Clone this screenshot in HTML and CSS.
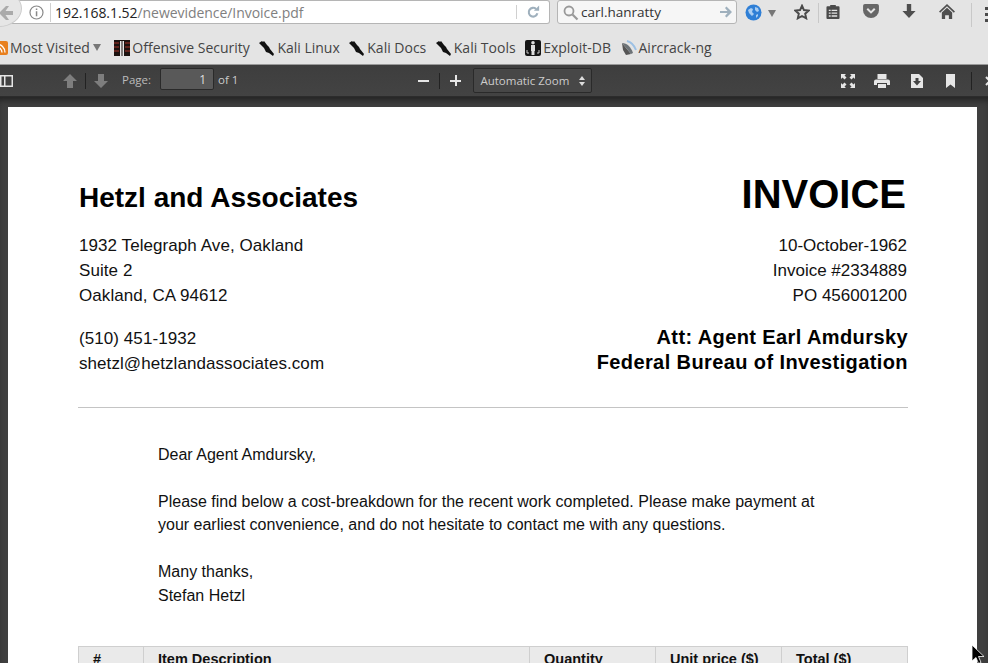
FILE: index.html
```html
<!DOCTYPE html>
<html lang="en">
<head>
    <meta charset="UTF-8">
    <title>Invoice.pdf</title>
    <link rel="stylesheet" href="styles.css">
</head>
<body>
    <div class="nav">
        <div class="url-bar">
            <svg class="info-icon" width="15" height="15" viewBox="0 0 15 15"><circle cx="7.5" cy="7.5" r="6.5" fill="none" stroke="#888" stroke-width="1.2"/><path d="M6.8 3.5h1.5V5H6.800zM6.800 6.300h1.500v5H6.800z" fill="#888"/></svg>
            <span class="url-text">192.168.1.52<span class="url-path">/newevidence/Invoice.pdf</span></span>
            <span class="reload">
                <svg width="14" height="14" viewBox="0 0 16 16"><path d="M13 9.500A5 5 0 1 1 11.500 4.500" fill="none" stroke="#9fb0bd" stroke-width="2.400"/><path d="M9 6.500h6v-6z" fill="#9fb0bd"/></svg>
            </span>
        </div>
        <span class="back-btn">
            <svg width="14" height="14" viewBox="0 0 14 14"><path d="M7 0 0 7l7 7h3L6.500 9H14V5H6.500L10 0z" fill="#aaa"/></svg>
        </span>
        <div class="search-bar">
            <svg width="17" height="17" viewBox="0 0 17 17"><circle cx="7" cy="7" r="4.500" fill="none" stroke="#999" stroke-width="1.800"/><path d="m10.500 10.500 5 5" stroke="#999" stroke-width="2.200"/></svg>
            <span class="search-text">carl.hanratty</span>
            <svg width="12" height="12" viewBox="0 0 12 12"><path d="M0 5h7.500L5 2l1.500-1.500L12 6l-5.500 5.500L5 10l2.500-3H0z" fill="#9fb0bd"/></svg>
        </div>
        <svg class="globe" width="17" height="17" viewBox="0 0 17 17"><circle cx="8.500" cy="8.500" r="8" fill="#2f7fd6"/><path d="M3 6l3-2 2 1-1 3 2 2-2 2-3-3zM10 3l3 1 1 3-2 1-2-2zM11 11l2-1 0 2-2 2z" fill="#a9cdf2"/></svg>
        <span class="tri-down"></span>
        <div class="nav-btn star-btn">
            <svg width="16" height="16" viewBox="0 0 18 17"><path d="M9 1.500 11.200 6.300 16.500 6.900 12.600 10.400 13.700 15.600 9 13 4.300 15.600 5.400 10.400 1.500 6.900 6.800 6.300z" fill="none" stroke="#4a4a4a" stroke-width="2.200"/></svg>
        </div>
        <div class="nav-sep"></div>
        <div class="nav-btn list-btn">
            <svg width="14" height="15" viewBox="0 0 15 16"><path d="M1.500 2.500h3V1h6v1.500h3a1 1 0 0 1 1 1V15a1 1 0 0 1-1 1h-12a1 1 0 0 1-1-1V3.500a1 1 0 0 1 1-1z" fill="#4a4a4a"/><path d="M3 6h2v1.500H3zM6 6h6v1.500H6zM3 9h2v1.500H3zM6 9h6v1.500H6zM3 12h2v1.500H3zM6 12h6v1.500H6z" fill="#e4e4e4"/></svg>
        </div>
        <div class="nav-btn">
            <svg width="16" height="14" viewBox="0 0 17 15"><path d="M2 0h13a2 2 0 0 1 2 2v5a8.500 8 0 0 1-17 0V2a2 2 0 0 1 2-2z" fill="#666"/><path d="m4.500 5 4 4 4-4" fill="none" stroke="#e4e4e4" stroke-width="2.200"/></svg>
        </div>
        <div class="nav-btn">
            <svg width="14" height="14" viewBox="0 0 15 16"><path d="M5 0h5v8h5l-7.500 8L0 8h5z" fill="#4e4e4e"/></svg>
        </div>
        <div class="nav-btn">
            <svg width="16" height="15" viewBox="0 0 17 16"><path d="M8.500 0 17 8l-1.200 1.200-7.300-6.800-7.300 6.800L0 8z" fill="#4e4e4e"/><path d="M8.500 4 14 9v7h-3.500v-4h-4v4H3V9z" fill="#4e4e4e"/></svg>
        </div>
        <div class="nav-sep menu-sep"></div>
        <div class="menu-btn"><span></span><span></span><span></span></div>
    </div>

    <div class="bookmarks">
        <span class="bookmark rss-item">
            <svg width="14" height="14" viewBox="0 0 14 14"><rect width="14" height="14" rx="2" fill="#e8801f"/><circle cx="4" cy="10" r="1.500" fill="#fff"/><path d="M2.500 6a5.500 5.500 0 0 1 5.500 5.500M2.500 3a8.500 8.500 0 0 1 8.500 8.500" fill="none" stroke="#fff" stroke-width="1.300"/></svg>
            Most Visited
            <span class="tri-small"></span>
        </span>
        <span class="bookmark">
            <svg width="16" height="16" viewBox="0 0 16 16"><rect width="16" height="16" fill="#1c1210"/><path d="M0 3h5M0 7h5M0 11h5M11 3h5M11 7h5M11 11h5" stroke="#7a2a22" stroke-width="1.500"/><path d="M6 1h1.500v15H6zM8.500 1H10v15H8.500z" fill="#e8e8e8"/></svg>
            Offensive Security
        </span>
        <span class="bookmark">
            <svg width="16" height="16" viewBox="0 0 16 16"><path d="M0 3 3 1l1 1 1-1 3 4 2 2 1 2 4 5-1 2-4-3-3-1-2-4-2-2-2-2z" fill="#111"/></svg>
            Kali Linux
        </span>
        <span class="bookmark">
            <svg width="16" height="16" viewBox="0 0 16 16"><path d="M0 3 3 1l1 1 1-1 3 4 2 2 1 2 4 5-1 2-4-3-3-1-2-4-2-2-2-2z" fill="#111"/></svg>
            Kali Docs
        </span>
        <span class="bookmark">
            <svg width="16" height="16" viewBox="0 0 16 16"><path d="M0 3 3 1l1 1 1-1 3 4 2 2 1 2 4 5-1 2-4-3-3-1-2-4-2-2-2-2z" fill="#111"/></svg>
            Kali Tools
        </span>
        <span class="bookmark">
            <svg width="16" height="16" viewBox="0 0 16 16"><rect width="16" height="16" rx="2" fill="#151515"/><circle cx="8" cy="2.800" r="1.800" fill="#ddd"/><path d="M6 5h4v6H9.500v4h-3v-4H6z" fill="#ddd"/><path d="M2 10v3h2M14 10v3h-2" fill="none" stroke="#ccc"/></svg>
            Exploit-DB
        </span>
        <span class="bookmark">
            <svg width="16" height="16" viewBox="0 0 16 16"><path d="M1 3 10 14 5 15 2 10z" fill="#555"/><path d="M1 3c5 0 9 4 11 10l-2 1z" fill="#6c7378"/><path d="M6 1c4 1 7 4 9 9" fill="none" stroke="#9cc0e4" stroke-width="2"/></svg>
            Aircrack-ng
        </span>
    </div>

    <div class="pdf-toolbar">
        <span class="tb-btn sidebar-btn">
            <svg width="13" height="12" viewBox="0 0 13 12"><path d="M0 0h13v12H0zM1.500 1.500v9H4v-9zM5.500 1.500v9h6v-9z" fill="#e6e6e6" fill-rule="evenodd"/></svg>
        </span>
        <svg class="arrow-up" width="14" height="14" viewBox="0 0 14 14"><path d="M7 0l7 7H10v7H4V7H0z" fill="#7e7e7e"/></svg>
        <span class="tb-sep"></span>
        <svg class="arrow-down" width="14" height="14" viewBox="0 0 14 14"><path d="M4 0h6v7h4l-7 7-7-7h4z" fill="#7e7e7e"/></svg>
        <span class="page-label">Page:</span>
        <span class="page-input">1</span>
        <span class="page-of">of 1</span>
        <span class="zoom-out"></span>
        <span class="tb-sep zoom-sep"></span>
        <span class="zoom-in"></span>
        <span class="zoom-select">Automatic Zoom
            <svg width="6" height="10" viewBox="0 0 6 10"><path d="M3 0l3 4H0zM3 10 0 6h6z" fill="#ddd"/></svg>
        </span>
        <svg class="tb-right full-icon" width="14" height="14" viewBox="0 0 14 14"><path d="M0 0h5L3.500 1.500 5.500 3.500 3.500 5.500 1.500 3.500 0 5zM14 0v5L12.500 3.500 10.500 5.500 8.500 3.500 10.500 1.500 9 0zM0 14V9l1.500 1.500 2-2 2 2-2 2L5 14zM14 14H9l1.500-1.500-2-2 2-2 2 2L14 9z" fill="#e6e6e6"/></svg>
        <svg class="tb-right print-icon" width="16" height="14" viewBox="0 0 16 14"><path d="M3.500 0h9v5h-9zM2 5.500h12a2 2 0 0 1 2 2V11h-3V9H3v2H0V7.500a2 2 0 0 1 2-2zM4 10h8v4H4z" fill="#e6e6e6"/></svg>
        <svg class="tb-right save-icon" width="12" height="14" viewBox="0 0 12 14"><path d="M0 0h8l4 4v10H0z" fill="#e6e6e6"/><path d="M4.500 4h3v3H10l-4 4.500L2 7h2.500z" fill="#444"/></svg>
        <svg class="tb-right mark-icon" width="9" height="14" viewBox="0 0 9 14"><path d="M0 0h9v14l-4.500-3.500L0 14z" fill="#e6e6e6"/></svg>
        <span class="tb-sep end-sep"></span>
        <svg class="tools-btn" width="10" height="10" viewBox="0 0 10 10"><path d="M1 1l4 4-4 4" fill="none" stroke="#e6e6e6" stroke-width="2"/></svg>
    </div>

    <div class="viewer">
        <div class="page">
            <div class="row head-row">
                <h1 class="company">Hetzl and Associates</h1>
                <div class="invoice-title">INVOICE</div>
            </div>
            <div class="row addr-row">
                <div class="lines">
                    <div>1932 Telegraph Ave, Oakland</div>
                    <div>Suite 2</div>
                    <div>Oakland, CA 94612</div>
                </div>
                <div class="lines right">
                    <div>10-October-1962</div>
                    <div>Invoice #2334889</div>
                    <div>PO 456001200</div>
                </div>
            </div>
            <div class="row contact-row">
                <div class="lines">
                    <div>(510) 451-1932</div>
                    <div>shetzl@hetzlandassociates.com</div>
                </div>
                <div class="lines right att">
                    <div>Att: Agent Earl Amdursky</div>
                    <div>Federal Bureau of Investigation</div>
                </div>
            </div>
            <hr class="rule">
            <div class="letter">
                <p>Dear Agent Amdursky,</p>
                <p>Please find below a cost-breakdown for the recent work completed. Please make payment at<br>your earliest convenience, and do not hesitate to contact me with any questions.</p>
                <p>Many thanks,<br>Stefan Hetzl</p>
            </div>
            <table class="items">
                <tr>
                    <th class="col-num">#</th>
                    <th class="col-desc">Item Description</th>
                    <th class="col-val">Quantity</th>
                    <th class="col-val">Unit price ($)</th>
                    <th class="col-val">Total ($)</th>
                </tr>
            </table>
        </div>
    </div>

    <svg class="cursor" width="14" height="20" viewBox="0 0 14 20"><path d="M1 0v16l4-3.500 2.500 6 2.500-1-2.500-6H13z" fill="#000" stroke="#fff" stroke-width=".8"/></svg>
</body>
</html>
```

FILE: styles.css
```css
html, body {
    margin: 0;
    height: 663px;
    overflow: hidden;
}
body {
    font-family: "Open Sans", sans-serif;
    background-color: #e4e4e4;
    color: #3a3a3a;
    position: relative;
}

/* browser nav bar */
.nav {
    display: flex;
    align-items: flex-start;
    height: 33px;
}
.url-bar {
    display: flex;
    align-items: center;
    box-sizing: border-box;
    width: 550px;
    height: 24px;
    padding-left: 29px;
    background-color: #ffffff;
    border: 1px solid #b5b5b5;
    border-left: none;
    border-radius: 0 3px 3px 0;
    flex-shrink: 0;
}
/* round back button sits over the left end of the url bar */
.back-btn {
    position: absolute;
    left: -24px;
    top: -10px;
    display: flex;
    align-items: center;
    justify-content: flex-end;
    box-sizing: border-box;
    width: 46px;
    height: 37px;
    padding: 8px 8px 0 0;
    background-color: #e6e6e6;
    border: 1px solid #cccccc;
    border-radius: 50%;
}
.url-text {
    margin-left: 6px;
    padding-left: 4px;
    border-left: 1px solid #d0d0d0;
    font-size: 14px;
    letter-spacing: -0.05px;
    color: #222;
    flex-grow: 1;
}
.url-path {
    color: #808080;
}
.reload {
    display: flex;
    justify-content: center;
    width: 32px;
    border-left: 1px solid #d0d0d0;
}
.search-bar {
    display: flex;
    align-items: center;
    box-sizing: border-box;
    width: 180px;
    height: 24px;
    margin-left: 7px;
    padding: 0 4px;
    background-color: #f6f6f6;
    border: 1px solid #b5b5b5;
    border-radius: 3px;
    flex-shrink: 0;
}
.search-text {
    margin-left: 2px;
    font-size: 13.500px;
    color: #333;
    flex-grow: 1;
}
.globe {
    margin: 4px 0 0 8px;
    flex-shrink: 0;
}
.tri-down {
    margin: 10px 0 0 6px;
    border-left: 4px solid transparent;
    border-right: 4px solid transparent;
    border-top: 7px solid #777;
}
.nav-btn {
    display: flex;
    justify-content: center;
    width: 38px;
    padding-top: 4px;
    flex-shrink: 0;
}
.star-btn {
    width: 18px;
    margin-left: 17px;
}
.nav-sep {
    width: 1px;
    height: 20px;
    margin: 3px 0 0 7px;
    background-color: #c8c8c8;
    flex-shrink: 0;
}
.list-btn {
    margin-left: -5px;
}
.menu-sep {
    margin-left: 5px;
    height: 24px;
    margin-top: 3px;
}
.menu-btn {
    display: flex;
    flex-direction: column;
    gap: 3px;
    width: 16px;
    margin: 7px 0 0 13px;
    flex-shrink: 0;
}
.menu-btn span {
    display: block;
    height: 3px;
    background-color: #4a4a4a;
}

/* bookmarks */
.bookmarks {
    display: flex;
    align-items: center;
    gap: 9.500px;
    height: 31px;
    padding-bottom: 1px;
    margin: -1px 0 0 -6px;
    font-size: 14px;
    color: #444;
    white-space: nowrap;
}
.bookmark {
    display: flex;
    align-items: center;
    gap: 2px;
}
.tri-small {
    margin-left: 1px;
    border-left: 4px solid transparent;
    border-right: 4px solid transparent;
    border-top: 7px solid #777;
}
.rss-item {
    margin-right: 4px;
}

/* pdf viewer toolbar */
.pdf-toolbar {
    display: flex;
    align-items: center;
    box-sizing: border-box;
    height: 33px;
    border-top: 1px solid #999;
    background-image: linear-gradient(#3e3e3e, #434343);
    border-bottom: 1px solid #2c2c2c;
    color: #d0d0d0;
    font-size: 11.500px;
    white-space: nowrap;
}
.pdf-toolbar > * {
    flex-shrink: 0;
}
.tb-btn {
    display: flex;
}
.arrow-up {
    margin-left: 50px;
}
.tb-sep {
    width: 1px;
    height: 16px;
    margin: 0 8px;
    background-color: #222;
}
.page-label {
    margin: 0 0 3px 14px;
    color: #bbb;
}
.page-input {
    box-sizing: border-box;
    width: 54px;
    height: 22px;
    margin: 0 0 3px 9px;
    padding: 2px 7px;
    text-align: right;
    font-size: 12px;
    background-color: #595959;
    border: 1px solid #2a2a2a;
    border-radius: 2px;
    color: #ddd;
}
.page-of {
    margin: 0 0 3px 4px;
    color: #ccc;
}
.zoom-out {
    width: 11px;
    height: 2px;
    margin-left: 180px;
    background-color: #e6e6e6;
}
.zoom-sep {
    margin: 0 10px;
}
.zoom-in {
    width: 11px;
    height: 11px;
    background-image: linear-gradient(#e6e6e6, #e6e6e6), linear-gradient(#e6e6e6, #e6e6e6);
    background-size: 11px 2px, 2px 11px;
    background-position: center;
    background-repeat: no-repeat;
}
.zoom-select {
    display: flex;
    align-items: center;
    justify-content: space-between;
    box-sizing: border-box;
    width: 119px;
    height: 25px;
    margin-left: 12px;
    padding: 0 6px;
    background-color: #474747;
    border: 1px solid #2a2a2a;
    border-radius: 2px;
    font-size: 11.500px;
    color: #ccc;
}
.full-icon {
    margin-left: 249px;
}
.print-icon {
    margin-left: 19px;
}
.save-icon {
    margin-left: 21px;
}
.mark-icon {
    margin-left: 23px;
}
.end-sep {
    height: 18px;
    margin: 0 0 0 16px;
}
.tools-btn {
    margin-left: 13px;
}

/* pdf page */
.viewer {
    box-sizing: border-box;
    height: 566px;
    padding: 10px 11px 0 8px;
    background-color: #3f3f3f;
    box-shadow: inset 0 6px 6px -3px #222;
    overflow: hidden;
}
.page {
    box-sizing: border-box;
    height: 640px;
    padding: 66px 69px 0 70px;
    background-color: #ffffff;
    color: #111;
    font-family: "Liberation Sans", Arial, sans-serif;
    font-size: 17px;
}
.row {
    display: flex;
    justify-content: space-between;
}
.head-row {
    align-items: center;
    height: 46px;
    color: #000;
}
.company {
    margin: 4px 0 0 1px;
    font-size: 28px;
    font-weight: bold;
}
.invoice-title {
    margin: 0 2px 4px 0;
    font-size: 40px;
    font-weight: bold;
}
.addr-row {
    margin: 14px 0 0 1px;
}
.contact-row {
    margin: 18px 0 0 1px;
}
.lines {
    line-height: 25px;
    letter-spacing: 0.07px;
}
.addr-row .right {
    margin-right: 1px;
    letter-spacing: 0;
}
.right {
    text-align: right;
}
.att {
    margin-top: -1px;
    font-size: 20px;
    font-weight: bold;
    letter-spacing: 0.4px;
    color: #000;
}
.rule {
    margin: 31px 0 0;
    border: none;
    border-top: 1px solid #c4c4c4;
}
.letter {
    margin-top: 35px;
    padding-left: 80px;
    font-size: 16px;
    line-height: 23.400px;
}
.letter p {
    margin: 0 0 23.500px;
}
.items {
    width: 830px;
    margin-top: 38.500px;
    border-collapse: collapse;
    table-layout: fixed;
}
.items th {
    box-sizing: border-box;
    height: 30px;
    padding: 4px 14px;
    vertical-align: top;
    text-align: left;
    font-size: 14.500px;
    background-color: #eaeaea;
    border: 1px solid #cfcfcf;
}
.col-num, .col-desc {
    padding-left: 13px;
}
.col-num {
    width: 65px;
}
.col-desc {
    width: 386px;
}
.col-val {
    width: 126px;
}

.cursor {
    position: absolute;
    left: 971px;
    top: 645px;
}
```
